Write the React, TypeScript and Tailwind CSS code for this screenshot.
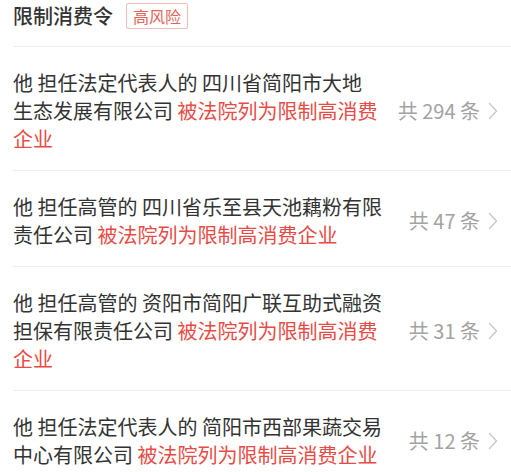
import React from "react";

interface Iseg {
  text: string;
  red?: boolean;
}

interface Irecord {
  id: number;
  lines: Iseg[][];
  count: number;
}

const records: Irecord[] = [
  {
    id: 0,
    lines: [
      [{ text: "他 担任法定代表人的 四川省简阳市大地" }],
      [{ text: "生态发展有限公司 " }, { text: "被法院列为限制高消费", red: true }],
      [{ text: "企业", red: true }],
    ],
    count: 294,
  },
  {
    id: 1,
    lines: [
      [{ text: "他 担任高管的 四川省乐至县天池藕粉有限" }],
      [{ text: "责任公司 " }, { text: "被法院列为限制高消费企业", red: true }],
    ],
    count: 47,
  },
  {
    id: 2,
    lines: [
      [{ text: "他 担任高管的 资阳市简阳广联互助式融资" }],
      [{ text: "担保有限责任公司 " }, { text: "被法院列为限制高消费", red: true }],
      [{ text: "企业", red: true }],
    ],
    count: 31,
  },
  {
    id: 3,
    lines: [
      [{ text: "他 担任法定代表人的 简阳市西部果蔬交易" }],
      [{ text: "中心有限公司 " }, { text: "被法院列为限制高消费企业", red: true }],
    ],
    count: 12,
  },
];

function Chevron() {
  return (
    <svg width="10" height="18" viewBox="0 0 10 18" fill="none" className="shrink-0">
      <polyline points="1.5,1.5 8.5,9 1.5,16.5" stroke="#c9c9c9" strokeWidth="1.4" strokeLinecap="round" strokeLinejoin="round" />
    </svg>
  );
}

function RecordRow({ record }: { record: Irecord }) {
  return (
    <div className="flex items-center border-t border-[#ededed] pt-[22px] pb-[17px] pr-[13px]">
      <div className="w-[372px] text-[20px] leading-[28px] text-[#333333]">
        {record.lines.map((line, i) => (
          <div key={i} className="whitespace-pre">
            {line.map((seg, j) =>
              seg.red ? (
                <span key={j} className="text-[#e84b45]">{seg.text}</span>
              ) : (
                <span key={j}>{seg.text}</span>
              )
            )}
          </div>
        ))}
      </div>
      <div className="ml-auto flex items-center gap-[8px]">
        <span className="text-[20px] leading-[28px] text-[#a3a3a3] whitespace-pre">{`共 ${record.count} 条`}</span>
        <Chevron />
      </div>
    </div>
  );
}

export default function App(): JSX.Element {
  return (
    <div className="w-[511px] h-[472px] overflow-hidden bg-white" style={{ fontFamily: '"Noto Sans CJK SC", "Noto Sans", sans-serif' }}>
      <div className="flex items-center gap-[13px] px-[13px] pt-[3px] pb-[17px]">
        <h1 className="text-[20px] leading-[26px] font-medium text-[#333333]">限制消费令</h1>
        <span className="h-[26px] px-[6px] flex items-center border border-[#f0bdb6] rounded-[2px] text-[16px] text-[#e2645a]">高风险</span>
      </div>
      <div className="ml-[13px]">
        {records.map((one) => (
          <RecordRow key={one.id} record={one} />
        ))}
      </div>
    </div>
  );
}
